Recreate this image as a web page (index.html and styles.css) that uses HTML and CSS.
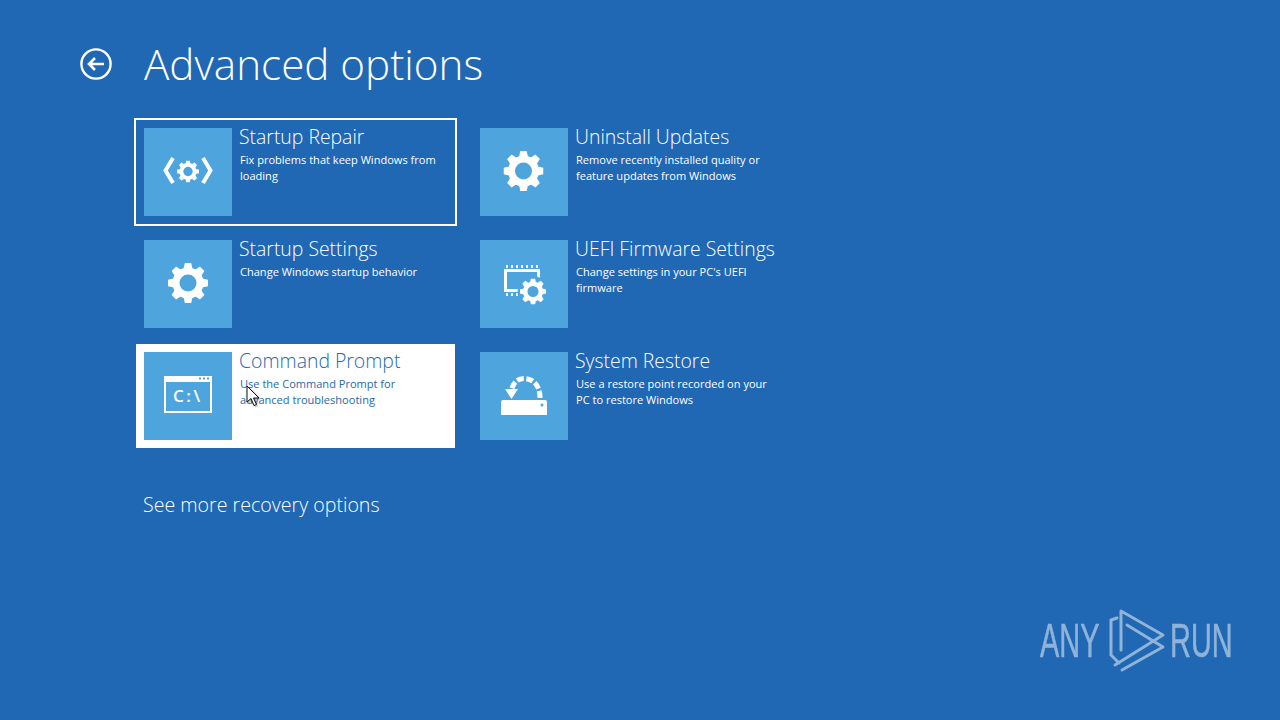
FILE: index.html
```html
<!DOCTYPE html>
<html lang="en">
<head>
<meta charset="utf-8">
<title>Advanced options</title>
<link rel="stylesheet" href="styles.css">
</head>
<body>
<svg class="defs" width="0" height="0" aria-hidden="true">
  <symbol id="gear" viewBox="0 0 40 40">
    <circle cx="20" cy="20" r="12" fill="none" stroke="#fff" stroke-width="7"/>
    <path fill="#fff" d="M15.500 6 16.800 0h6.400l1.300 6zM15.500 34l1.300 6h6.400l1.300-6zM6 15.500 0 16.800v6.400l6 1.300zM34 15.500l6 1.300v6.400l-6 1.300z"/>
    <path fill="#fff" transform="rotate(45 20 20)" d="M15.500 6 16.800 0h6.400l1.300 6zM15.500 34l1.300 6h6.400l1.300-6zM6 15.500 0 16.800v6.400l6 1.300zM34 15.500l6 1.300v6.400l-6 1.300z"/>
  </symbol>
</svg>
<main class="page">
  <header class="head">
    <svg class="back" viewBox="0 0 32 32"><circle cx="16" cy="16" r="14.600" fill="none" stroke="#fff" stroke-width="2.400"/><path d="M24 16H9M15 10 9 16l6 6" fill="none" stroke="#fff" stroke-width="2.600"/></svg>
    <h1 class="title">Advanced options</h1>
  </header>
  <section class="grid">
    <div class="tile focus">
      <div class="icon">
        <svg class="glyph" viewBox="0 0 88 88">
          <path d="M29 30 L21.500 42.500 L29 55M59 30 L66.500 42.500 L59 55" fill="none" stroke="#fff" stroke-width="4"/>
          <use href="#gear" x="33" y="32.500" width="22" height="22"/>
        </svg>
      </div>
      <div class="text"><h2>Startup Repair</h2><p>Fix problems that keep Windows from loading</p></div>
    </div>
    <div class="tile">
      <div class="icon"><svg class="glyph" viewBox="0 0 88 88"><use href="#gear" x="23.500" y="23" width="40" height="40"/></svg></div>
      <div class="text"><h2>Uninstall Updates</h2><p>Remove recently installed quality or feature updates from Windows</p></div>
    </div>
    <div class="tile">
      <div class="icon"><svg class="glyph" viewBox="0 0 88 88"><use href="#gear" x="24" y="23" width="40" height="40"/></svg></div>
      <div class="text"><h2>Startup Settings</h2><p>Change Windows startup behavior</p></div>
    </div>
    <div class="tile">
      <div class="icon">
        <svg class="glyph" viewBox="0 0 88 88">
          <path d="M25.500 30.500h33v20h-33z" fill="none" stroke="#fff" stroke-width="3"/>
          <path d="M26 25h2v3h-2zM31 25h2v3h-2zM36 25h2v3h-2zM41 25h2v3h-2zM46 25h2v3h-2zM51 25h2v3h-2zM56 25h2v3h-2zM26 53h2v3h-2zM31 53h2v3h-2zM36 53h2v3h-2z" fill="#fff"/>
          <circle cx="53" cy="51.500" r="15.500" fill="#4ea5de"/>
          <use href="#gear" x="40" y="38.500" width="26" height="26"/>
        </svg>
      </div>
      <div class="text"><h2>UEFI Firmware Settings</h2><p>Change settings in your PC's UEFI firmware</p></div>
    </div>
    <div class="tile hover">
      <div class="icon">
        <svg class="glyph" viewBox="0 0 88 88">
          <path d="M21 25h46v35H21z" fill="none" stroke="#fff" stroke-width="2"/>
          <path d="M20 24h48v6H20z" fill="#fff"/>
          <path d="M55 25.500h2v2h-2zM59 25.500h2v2h-2zM63 25.500h2v2h-2z" fill="#4ea5de"/>
          <text class="prompt" x="29" y="50">C:\</text>
        </svg>
      </div>
      <div class="text"><h2>Command Prompt</h2><p>Use the Command Prompt for advanced troubleshooting</p></div>
      <svg class="cursor" viewBox="0 0 14 22"><path d="M1 1v16l4-3.500 3 7 2.500-1-3-6.500h5.500z" fill="#fff" stroke="#111" stroke-width="1"/></svg>
    </div>
    <div class="tile">
      <div class="icon">
        <svg class="glyph" viewBox="0 0 88 88">
          <path d="M23 48h42a2 2 0 0 1 2 2v13H21V50a2 2 0 0 1 2-2z" fill="#fff"/>
          <circle cx="62" cy="53" r="1.500" fill="#4ea5de"/>
          <path d="M60 46C60 33 53 26.500 44 26.500 38 26.500 33.500 30 31.500 38" fill="none" stroke="#fff" stroke-width="5" stroke-dasharray="7 2.500"/>
          <path d="M25 37h13l-6.500 10z" fill="#fff"/>
        </svg>
      </div>
      <div class="text"><h2>System Restore</h2><p>Use a restore point recorded on your PC to restore Windows</p></div>
    </div>
  </section>
  <a class="more">See more recovery options</a>
  <div class="mark">
    <span class="mark-any">ANY</span>
    <svg class="mark-logo" viewBox="0 0 70 70"><path d="M21 45V6L63 30 15 60M27 20 63 42 22 65M17 13 11 15V50L19 58" fill="none" stroke="#8fb3d9" stroke-width="3" stroke-linejoin="round" stroke-linecap="round"/></svg>
    <span class="mark-run">RUN</span>
  </div>
</main>
</body>
</html>
```
FILE: styles.css
```css
* { box-sizing: border-box; }
html, body { margin: 0; height: 100%; }
body { background: #2067b4; color: #fff; font-family: "Open Sans", "Noto Sans", sans-serif; overflow: hidden; }
.defs { position: absolute; }
.page { position: relative; width: 1280px; height: 720px; padding: 48px 0 0 80px; }
.head { display: flex; align-items: center; gap: 32px; height: 32px; }
.back { width: 32px; height: 32px; flex: none; }
.title { margin: 0; font-size: 42.200px; font-weight: 300; line-height: 32px; white-space: nowrap; }
.grid { display: grid; grid-template-columns: 319px 319px; grid-auto-rows: 104px; column-gap: 17px; row-gap: 8px; margin: 40px 0 0 56px; }
.tile { position: relative; display: flex; gap: 7px; padding: 8px; }
.tile.focus { outline: 2px solid #fff; }
.tile.hover { background: #fff; color: #2668ab; }
.icon { width: 88px; height: 88px; flex: none; background: #4ea5de; }
.glyph { display: block; width: 88px; height: 88px; }
.text { min-width: 0; margin-top: -2px; }
.text h2 { margin: 0 0 5px; font-size: 19.400px; font-weight: 300; line-height: 21px; white-space: nowrap; }
.text p { margin: 0 0 0 1px; max-width: 200px; font-size: 11.050px; font-weight: 400; line-height: 16px; }
.prompt { font: 600 17px "Open Sans", sans-serif; fill: #fff; letter-spacing: 2.500px; }
.cursor { position: absolute; left: 110px; top: 41px; width: 14px; height: 22px; filter: drop-shadow(1px 1px 1px rgba(0, 0, 0, .35)); }
.more { display: block; margin: 45px 0 0 63px; font-size: 19.600px; font-weight: 300; line-height: 24px; color: #fff; }
.mark { position: absolute; left: 1040px; top: 605px; display: flex; align-items: center; height: 70px; color: #8fb3d9; font-family: "Liberation Sans", sans-serif; font-size: 49px; line-height: 1; -webkit-text-stroke: .6px #8fb3d9; }
.mark-any, .mark-run { display: block; white-space: nowrap; transform: scaleX(.59); transform-origin: left center; }
.mark-any { width: 60px; }
.mark-run { width: 62px; }
.mark-logo { width: 70px; height: 70px; flex: none; }
```
